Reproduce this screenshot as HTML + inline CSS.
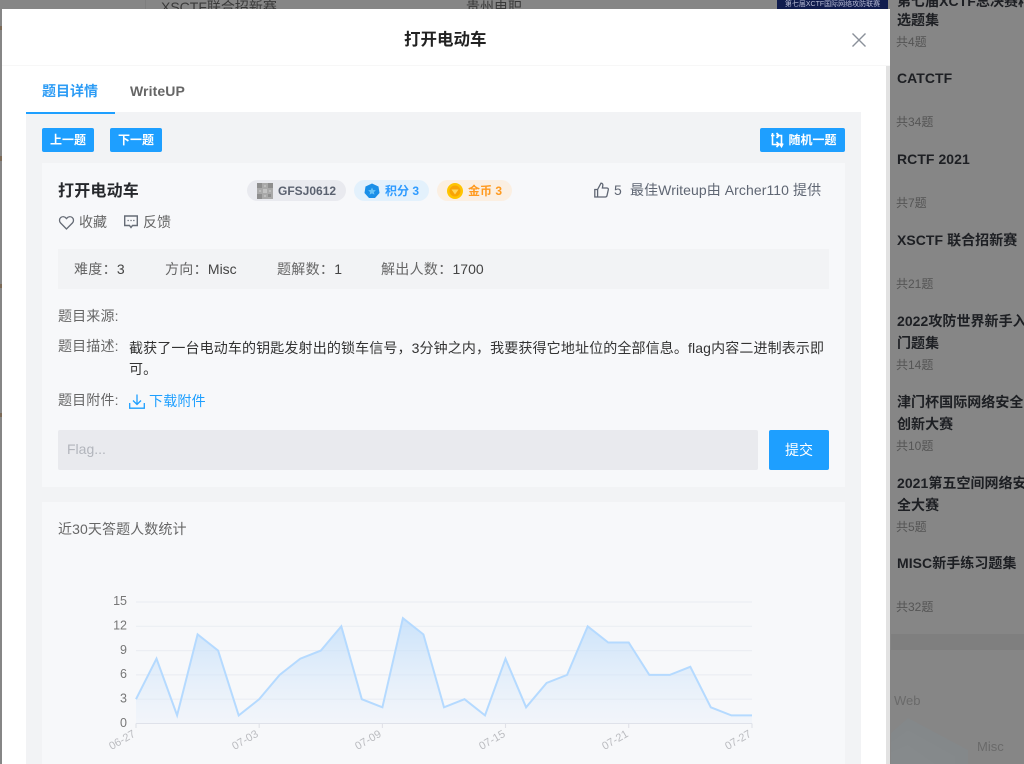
<!DOCTYPE html>
<html lang="zh">
<head>
<meta charset="utf-8">
<title>打开电动车</title>
<style>
html,body{margin:0;padding:0;width:1024px;height:764px;overflow:hidden;background:#868686;}
body{position:relative;font-family:"Liberation Sans","Noto Sans CJK SC",sans-serif;font-size:14px;color:#333;filter:blur(.3px);}
.a{position:absolute;}
.t{position:absolute;white-space:nowrap;line-height:20px;height:20px;}
.btn{position:absolute;background:#1e9fff;border-radius:2px;color:#fff;font-size:12px;font-weight:bold;line-height:24px;text-align:center;height:24px;top:128px;}
.pill{position:absolute;top:180px;height:21px;border-radius:11px;}
.pt{position:absolute;top:181px;line-height:20px;font-size:12px;font-weight:bold;white-space:nowrap;}
.side{position:absolute;left:897px;white-space:nowrap;line-height:20px;font-weight:bold;color:#1d1f23;font-size:14px;letter-spacing:.05px;}
.sub{position:absolute;left:896px;white-space:nowrap;line-height:20px;color:#555;font-size:12px;}
.l{color:#666;letter-spacing:.3px;}
.v{color:#444;}
svg{position:absolute;overflow:visible;}
</style>
</head>
<body>
<!-- dimmed background -->
<div class="a" style="left:145px;top:0;width:1px;height:9px;background:#7e7e7e"></div>
<div class="t" style="left:161px;top:-3px;color:#3a3a3a;font-size:14px;">XSCTF联合招新赛</div>
<div class="t" style="left:466px;top:-3px;color:#3a3a3a;font-size:14px;">贵州电职</div>
<div class="a" style="left:777px;top:0;width:111px;height:9px;background:#101c4e;overflow:hidden;color:#b9bdd6;font-size:7px;line-height:9px;text-align:center;white-space:nowrap;">第七届XCTF国际网络攻防联赛</div>
<div class="a" style="left:0;top:26px;width:2px;height:4px;background:#7b6a58"></div>
<div class="a" style="left:0;top:156px;width:2px;height:5px;background:#7b6a58"></div>
<div class="a" style="left:0;top:284px;width:2px;height:4px;background:#7b6a58"></div>
<div class="a" style="left:0;top:413px;width:2px;height:4px;background:#7b6a58"></div>

<div class="side" style="top:-9px;">第七届XCTF总决赛精</div>
<div class="side" style="top:10px;">选题集</div>
<div class="sub" style="top:32px;">共4题</div>
<div class="side" style="top:68px;">CATCTF</div>
<div class="sub" style="top:112px;">共34题</div>
<div class="side" style="top:149px;">RCTF 2021</div>
<div class="sub" style="top:193px;">共7题</div>
<div class="side" style="top:230px;">XSCTF 联合招新赛</div>
<div class="sub" style="top:274px;">共21题</div>
<div class="side" style="top:311px;">2022攻防世界新手入</div>
<div class="side" style="top:333px;">门题集</div>
<div class="sub" style="top:355px;">共14题</div>
<div class="side" style="top:392px;">津门杯国际网络安全</div>
<div class="side" style="top:414px;">创新大赛</div>
<div class="sub" style="top:436px;">共10题</div>
<div class="side" style="top:473px;">2021第五空间网络安</div>
<div class="side" style="top:495px;">全大赛</div>
<div class="sub" style="top:517px;">共5题</div>
<div class="side" style="top:553px;">MISC新手练习题集</div>
<div class="sub" style="top:597px;">共32题</div>
<div class="a" style="left:891px;top:634px;width:133px;height:16px;background:#7f7f7f"></div>
<svg style="left:0;top:0" width="1024" height="764">
<polygon points="891,733 908,718 968,750 968,764 891,764" fill="#84888a"/>
<polygon points="891,742 908,730 955,756 955,764 891,764" fill="#85898b"/>
<polygon points="891,752 908,745 935,764 891,764" fill="#868a8c"/>
</svg>
<div class="t" style="left:894px;top:691px;color:#6a6a6a;font-size:13px;">Web</div>
<div class="t" style="left:977px;top:737px;color:#6a6a6a;font-size:13px;">Misc</div>

<!-- modal -->
<div class="a" style="left:2px;top:9px;width:888px;height:755px;background:#fff;"></div>
<div class="a" style="left:2px;top:65px;width:888px;height:1px;background:#f7f7f7;"></div>
<div class="a" style="left:886px;top:66px;width:4px;height:698px;background:#e2e2e2;"></div>
<div class="t" style="left:404px;top:30px;font-size:16.5px;font-weight:bold;color:#222;">打开电动车</div>
<svg style="left:852px;top:33px" width="14" height="14" viewBox="0 0 14 14"><path d="M0.5 0.5L13.5 13.5M13.5 0.5L0.5 13.5" stroke="#8a9099" stroke-width="1.4" fill="none"/></svg>

<div class="t" style="left:42px;top:81px;font-weight:bold;color:#2d9cf5;">题目详情</div>
<div class="t" style="left:130px;top:81px;font-weight:bold;color:#666;letter-spacing:.1px;">WriteUP</div>
<div class="a" style="left:26px;top:112px;width:835px;height:652px;background:#f2f3f5;"></div>
<div class="a" style="left:26px;top:112px;width:89px;height:2px;background:#1e9fff;"></div>

<div class="btn" style="left:42px;width:52px;">上一题</div>
<div class="btn" style="left:110px;width:52px;">下一题</div>
<div class="btn" style="left:760px;width:85px;text-indent:20px;">随机一题</div>
<svg style="left:771px;top:132px" width="12" height="16" viewBox="0 0 12 16"><path d="M1.5 1L1.5 2.5V12.5H7.5M5.5 3.5H10.5V14M3.5 3.5H0M5.5 1L8 3.5L5.5 6M8 12.5L5.5 10M8 12.5L5.5 15M8.5 11.5L10.5 14.5L12 11.5" stroke="#fff" stroke-width="1.6" fill="none"/></svg>

<!-- main card -->
<div class="a" style="left:42px;top:163px;width:803px;height:324px;background:#f7f8fa;"></div>
<div class="t" style="left:58px;top:182px;font-size:16px;font-weight:bold;color:#26282c;letter-spacing:.2px;">打开电动车</div>

<div class="pill" style="left:247px;width:99px;background:#e9eaef;"></div>
<svg style="left:257px;top:183px" width="16" height="16" viewBox="0 0 16 16"><rect width="16" height="16" fill="#a9a9a9"/><path d="M0 0H5V5H0ZM11 0H16V5H11ZM0 11H5V16H0ZM11 11H14V14H11Z" fill="#8e8e8e"/><path d="M6 6H10V10H6Z" fill="#c2c2c2"/><path d="M7 2H9V4H7ZM2 7H4V9H2ZM12 7H14V9H12ZM7 12H9V14H7Z" fill="#bcbcbc"/></svg>
<div class="pt" style="left:278px;color:#5b6270;">GFSJ0612</div>
<div class="pill" style="left:354px;width:75px;background:#e3f1fc;"></div>
<svg style="left:364px;top:183px" width="16" height="16" viewBox="0 0 16 16"><polygon points="8,0.5 14.5,3.5 15.5,10 11,15 5,15 0.5,10 1.5,3.5" fill="#1a8fe8"/><polygon points="8,4.5 9.2,7 11.8,7.3 9.9,9.1 10.4,11.6 8,10.4 5.6,11.6 6.1,9.1 4.2,7.3 6.8,7" fill="#69c3f7"/></svg>
<div class="pt" style="left:385px;color:#2e9bff;">积分 3</div>
<div class="pill" style="left:437px;width:75px;background:#fbefe2;"></div>
<svg style="left:447px;top:183px" width="16" height="16" viewBox="0 0 16 16"><circle cx="8" cy="8" r="8" fill="#ffc400"/><circle cx="8" cy="8" r="5.5" fill="#f9a405"/><path d="M4.5 6.5H11.5L8 11.5Z" fill="#ffd75e"/></svg>
<div class="pt" style="left:468px;color:#ff9a1f;">金币 3</div>

<svg style="left:594px;top:182px" width="15" height="16" viewBox="0 0 15 16"><path d="M0.8 7.5H3.6V15H0.8ZM3.6 7.5L7 1.2C8.6 1.2 9 2.4 8.8 3.6L8.4 6H13C14 6 14.5 6.8 14.3 7.8L13 13.6C12.8 14.5 12.2 15 11.3 15H3.6" stroke="#5f6673" stroke-width="1.3" fill="none"/></svg>
<div class="t" style="left:614px;top:180px;color:#5f6673;">5</div>
<div class="t" style="left:630px;top:180px;color:#5f6673;letter-spacing:.08px;">最佳Writeup由 Archer110 提供</div>

<svg style="left:59px;top:215px" width="15" height="15" viewBox="0 0 15 15"><path d="M7.5 14L1.6 8C0 6.3 0.2 3.8 1.8 2.5C3.5 1.2 5.8 1.6 7.5 3.6C9.2 1.6 11.5 1.2 13.2 2.5C14.8 3.8 15 6.3 13.4 8Z" stroke="#666c76" stroke-width="1.3" fill="none"/></svg>
<div class="t" style="left:79px;top:212px;color:#666;">收藏</div>
<svg style="left:124px;top:215px" width="14" height="14" viewBox="0 0 14 14"><path d="M0.7 1H13.3V10.5H8.5L7 12.5L5.5 10.5H0.7Z" stroke="#666c76" stroke-width="1.4" fill="none"/><path d="M3.5 5.5H4.8M6.4 5.5H7.7M9.2 5.5H10.5" stroke="#666c76" stroke-width="1.3"/></svg>
<div class="t" style="left:143px;top:212px;color:#666;">反馈</div>

<div class="a" style="left:58px;top:249px;width:771px;height:40px;background:#f2f3f5;"></div>
<div class="t" style="left:74px;top:259px;"><span class="l">难度：</span><span class="v">3</span></div>
<div class="t" style="left:165px;top:259px;"><span class="l">方向：</span><span class="v">Misc</span></div>
<div class="t" style="left:277px;top:259px;"><span class="l">题解数：</span><span class="v">1</span></div>
<div class="t" style="left:381px;top:259px;"><span class="l">解出人数：</span><span class="v">1700</span></div>

<div class="t l" style="left:58px;top:306px;letter-spacing:.15px;">题目来源:</div>
<div class="t l" style="left:58px;top:336px;letter-spacing:.15px;">题目描述:</div>
<div class="a" style="left:129px;top:338px;width:710px;line-height:21px;color:#333;white-space:nowrap;letter-spacing:.13px;">截获了一台电动车的钥匙发射出的锁车信号，3分钟之内，我要获得它地址位的全部信息。flag内容二进制表示即<br>可。</div>
<div class="t l" style="left:58px;top:390px;letter-spacing:.15px;">题目附件:</div>
<svg style="left:129px;top:393px" width="16" height="16" viewBox="0 0 16 16"><path d="M8 1.5V11M4 7.5L8 11.5L12 7.5M0.7 10V15.2H15.3V10" stroke="#1e9fff" stroke-width="1.3" fill="none"/></svg>
<div class="t" style="left:149px;top:391px;color:#1e9fff;letter-spacing:.2px;">下载附件</div>

<div class="a" style="left:58px;top:430px;width:700px;height:40px;background:#e9eaee;border-radius:2px;"></div>
<div class="t" style="left:67px;top:439px;color:#b2b5bc;">Flag...</div>
<div class="a" style="left:769px;top:430px;width:60px;height:40px;line-height:40px;background:#1e9fff;border-radius:2px;color:#fff;text-align:center;">提交</div>

<!-- chart card -->
<div class="a" style="left:42px;top:502px;width:803px;height:262px;background:#f7f8fa;"></div>
<div class="t l" style="left:58px;top:519px;letter-spacing:.1px;">近30天答题人数统计</div>

<svg style="left:0;top:0" width="1024" height="764">
<defs><linearGradient id="g" x1="0" y1="0" x2="0" y2="1"><stop offset="0" stop-color="#bcdcfb" stop-opacity=".75"/><stop offset="1" stop-color="#d6e6fa" stop-opacity=".15"/></linearGradient></defs>
<g stroke="#eceef3" stroke-width="1.2">
<path d="M136 602H752M136 626.3H752M136 650.6H752M136 674.9H752M136 699.2H752"/>
</g>
<path d="M136 723.5H752M136 723.5V728M259.2 723.5V728M382.4 723.5V728M505.5 723.5V728M628.7 723.5V728M752 723.5V728" stroke="#e0e2e8" stroke-width="1.1" fill="none"/>
<polygon fill="url(#g)" points="136,723.5 136,699.2 156.5,658.7 177.1,715.4 197.6,634.4 218.1,650.6 238.7,715.4 259.2,699.2 279.7,674.9 300.2,658.7 320.8,650.6 341.3,626.3 361.8,699.2 382.4,707.3 402.9,618.2 423.4,634.4 444,707.3 464.5,699.2 485,715.4 505.5,658.7 526.1,707.3 546.6,683 567.1,674.9 587.7,626.3 608.2,642.5 628.7,642.5 649.3,674.9 669.8,674.9 690.3,666.8 710.8,707.3 731.4,715.4 752,715.4 752,723.5"/>
<polyline fill="none" stroke="#b5daff" stroke-width="2" points="136,699.2 156.5,658.7 177.1,715.4 197.6,634.4 218.1,650.6 238.7,715.4 259.2,699.2 279.7,674.9 300.2,658.7 320.8,650.6 341.3,626.3 361.8,699.2 382.4,707.3 402.9,618.2 423.4,634.4 444,707.3 464.5,699.2 485,715.4 505.5,658.7 526.1,707.3 546.6,683 567.1,674.9 587.7,626.3 608.2,642.5 628.7,642.5 649.3,674.9 669.8,674.9 690.3,666.8 710.8,707.3 731.4,715.4 752,715.4"/>
<g font-family="Liberation Sans, sans-serif" font-size="12.5" fill="#777" text-anchor="end">
<text x="127" y="605">15</text><text x="127" y="629.5">12</text><text x="127" y="654">9</text><text x="127" y="678">6</text><text x="127" y="702.5">3</text><text x="127" y="727">0</text>
</g>
<g font-family="Liberation Sans, sans-serif" font-size="11" fill="#bbbcc0" text-anchor="end">
<text transform="translate(136,736) rotate(-30)">06-27</text>
<text transform="translate(259,736) rotate(-30)">07-03</text>
<text transform="translate(382,736) rotate(-30)">07-09</text>
<text transform="translate(506,736) rotate(-30)">07-15</text>
<text transform="translate(629,736) rotate(-30)">07-21</text>
<text transform="translate(752,736) rotate(-30)">07-27</text>
</g>
</svg>
</body>
</html>
